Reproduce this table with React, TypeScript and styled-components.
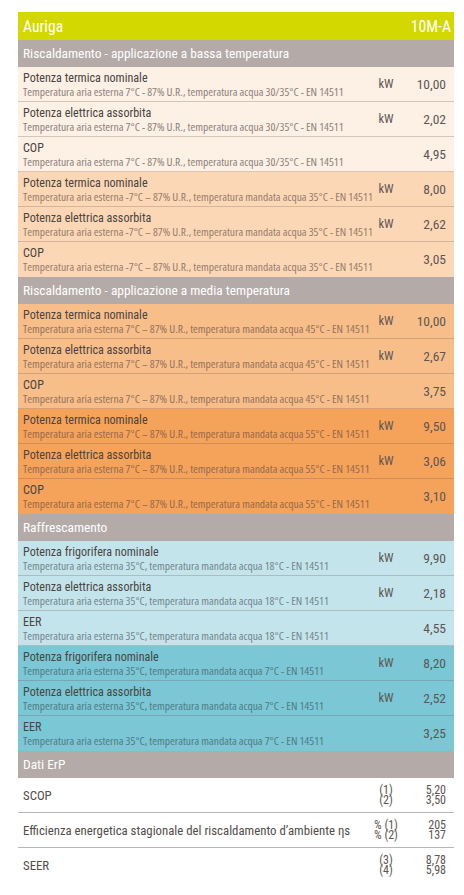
import React from 'react';
import styled, { createGlobalStyle } from 'styled-components';

const GlobalStyle = createGlobalStyle`
  html, body {
    margin: 0;
    padding: 0;
    background: #ffffff;
  }
  body {
    font-family: Roboto, 'Liberation Sans', Arial, sans-serif;
    font-stretch: 75%;
  }
`;

const Page = styled.div`
  padding: 12px 10px 11px 18px;
`;

const Table = styled.div`
  display: flex;
  flex-direction: column;
  width: 436px;
`;

const TitleBar = styled.div`
  height: 28px;
  background: #d3d800;
  color: #ffffff;
  display: flex;
  align-items: center;
  justify-content: space-between;
  padding: 0 3px 0 5px;
  font-size: 15.7px;
`;

const SectionHeader = styled.div`
  height: 27px;
  background: #b4aba9;
  color: #ffffff;
  display: flex;
  align-items: center;
  padding: 0 5px;
  font-size: 13.4px;
`;

const Row = styled.div<{ $bg: string; $last?: boolean }>`
  height: 34px;
  background: ${(p) => p.$bg};
  border-bottom: 1px solid ${(p) => (p.$last ? 'transparent' : 'rgba(110, 90, 80, 0.28)')};
  display: grid;
  grid-template-columns: minmax(0, 1fr) 36px 42px;
  align-items: center;
  padding: 0 8px 0 5px;
`;

const LabelCell = styled.div`
  display: flex;
  flex-direction: column;
  justify-content: center;
  min-width: 0;
  padding-top: 2px;
`;

const Label = styled.div`
  font-size: 12.1px;
  line-height: 13px;
  color: #4a4441;
  white-space: nowrap;
`;

const Note = styled.div<{ $tone: string }>`
  font-family: 'Open Sans', 'Liberation Sans', Arial, sans-serif;
  font-size: 11.5px;
  font-stretch: 75%;
  line-height: 13px;
  color: ${(p) => p.$tone};
  white-space: nowrap;
`;

const Unit = styled.div<{ $small?: boolean }>`
  font-size: ${(p) => (p.$small ? '12px' : '12.5px')};
  color: #5d5653;
  text-align: center;
  line-height: 10.5px;
`;

const Value = styled.div<{ $small?: boolean }>`
  font-size: ${(p) => (p.$small ? '12px' : '13.5px')};
  color: #5d5653;
  text-align: right;
  line-height: 10.5px;
`;

const ErpRow = styled(Row)`
  border-bottom: 1px solid ${(p) => (p.$last ? 'transparent' : '#b9b5b3')};
`;

const ErpLabel = styled.div`
  font-size: 12.8px;
  color: #524d4b;
  white-space: nowrap;
`;

type DataRow = { label: string; note: string; unit?: string; value: string };
type Group = { bg: string; tone: string; rows: DataRow[] };
type Section = { title: string; groups: Group[] };

const noteA = 'Temperatura aria esterna 7°C - 87% U.R., temperatura acqua 30/35°C - EN 14511';
const noteB = 'Temperatura aria esterna -7°C – 87% U.R., temperatura mandata acqua 35°C - EN 14511';
const noteC = 'Temperatura aria esterna 7°C – 87% U.R., temperatura mandata acqua 45°C - EN 14511';
const noteD = 'Temperatura aria esterna 7°C – 87% U.R., temperatura mandata acqua 55°C - EN 14511';
const noteE = 'Temperatura aria esterna 35°C, temperatura mandata acqua 18°C - EN 14511';
const noteF = 'Temperatura aria esterna 35°C, temperatura mandata acqua 7°C - EN 14511';

const sections: Section[] = [
  {
    title: 'Riscaldamento - applicazione a bassa temperatura',
    groups: [
      {
        bg: '#fdf0e5',
        tone: '#8c817b',
        rows: [
          { label: 'Potenza termica nominale', note: noteA, unit: 'kW', value: '10,00' },
          { label: 'Potenza elettrica assorbita', note: noteA, unit: 'kW', value: '2,02' },
          { label: 'COP', note: noteA, value: '4,95' },
        ],
      },
      {
        bg: '#fcd7b6',
        tone: '#957c6a',
        rows: [
          { label: 'Potenza termica nominale', note: noteB, unit: 'kW', value: '8,00' },
          { label: 'Potenza elettrica assorbita', note: noteB, unit: 'kW', value: '2,62' },
          { label: 'COP', note: noteB, value: '3,05' },
        ],
      },
    ],
  },
  {
    title: 'Riscaldamento - applicazione a media temperatura',
    groups: [
      {
        bg: '#f8be8a',
        tone: '#93725a',
        rows: [
          { label: 'Potenza termica nominale', note: noteC, unit: 'kW', value: '10,00' },
          { label: 'Potenza elettrica assorbita', note: noteC, unit: 'kW', value: '2,67' },
          { label: 'COP', note: noteC, value: '3,75' },
        ],
      },
      {
        bg: '#f5a35a',
        tone: '#96694a',
        rows: [
          { label: 'Potenza termica nominale', note: noteD, unit: 'kW', value: '9,50' },
          { label: 'Potenza elettrica assorbita', note: noteD, unit: 'kW', value: '3,06' },
          { label: 'COP', note: noteD, value: '3,10' },
        ],
      },
    ],
  },
  {
    title: 'Raffrescamento',
    groups: [
      {
        bg: '#c4e4ec',
        tone: '#71858a',
        rows: [
          { label: 'Potenza frigorifera nominale', note: noteE, unit: 'kW', value: '9,90' },
          { label: 'Potenza elettrica assorbita', note: noteE, unit: 'kW', value: '2,18' },
          { label: 'EER', note: noteE, value: '4,55' },
        ],
      },
      {
        bg: '#7bc7d5',
        tone: '#4f7b84',
        rows: [
          { label: 'Potenza frigorifera nominale', note: noteF, unit: 'kW', value: '8,20' },
          { label: 'Potenza elettrica assorbita', note: noteF, unit: 'kW', value: '2,52' },
          { label: 'EER', note: noteF, value: '3,25' },
        ],
      },
    ],
  },
];

const erp = [
  { label: 'SCOP', units: ['(1)', '(2)'], values: ['5,20', '3,50'] },
  {
    label: 'Efficienza energetica stagionale del riscaldamento d’ambiente ηs',
    units: ['% (1)', '% (2)'],
    values: ['205', '137'],
  },
  { label: 'SEER', units: ['(3)', '(4)'], values: ['8,78', '5,98'] },
];

const App: React.FC = () => {
  return (
    <>
      <GlobalStyle />
      <Page>
        <Table>
          <TitleBar>
            <span>Auriga</span>
            <span>10M-A</span>
          </TitleBar>
          {sections.map((section) => (
            <React.Fragment key={section.title}>
              <SectionHeader>{section.title}</SectionHeader>
              {section.groups.map((group, gi) =>
                group.rows.map((row, ri) => (
                  <Row
                    key={`${gi}-${ri}`}
                    $bg={group.bg}
                    $last={gi === section.groups.length - 1 && ri === group.rows.length - 1}
                  >
                    <LabelCell>
                      <Label>{row.label}</Label>
                      <Note $tone={group.tone}>{row.note}</Note>
                    </LabelCell>
                    <Unit>{row.unit}</Unit>
                    <Value>{row.value}</Value>
                  </Row>
                ))
              )}
            </React.Fragment>
          ))}
          <SectionHeader>Dati ErP</SectionHeader>
          {erp.map((item, i) => (
            <ErpRow key={item.label} $bg="#ffffff" $last={i === erp.length - 1}>
              <ErpLabel>{item.label}</ErpLabel>
              <Unit $small>
                {item.units[0]}
                <br />
                {item.units[1]}
              </Unit>
              <Value $small>
                {item.values[0]}
                <br />
                {item.values[1]}
              </Value>
            </ErpRow>
          ))}
        </Table>
      </Page>
    </>
  );
};

export default App;
